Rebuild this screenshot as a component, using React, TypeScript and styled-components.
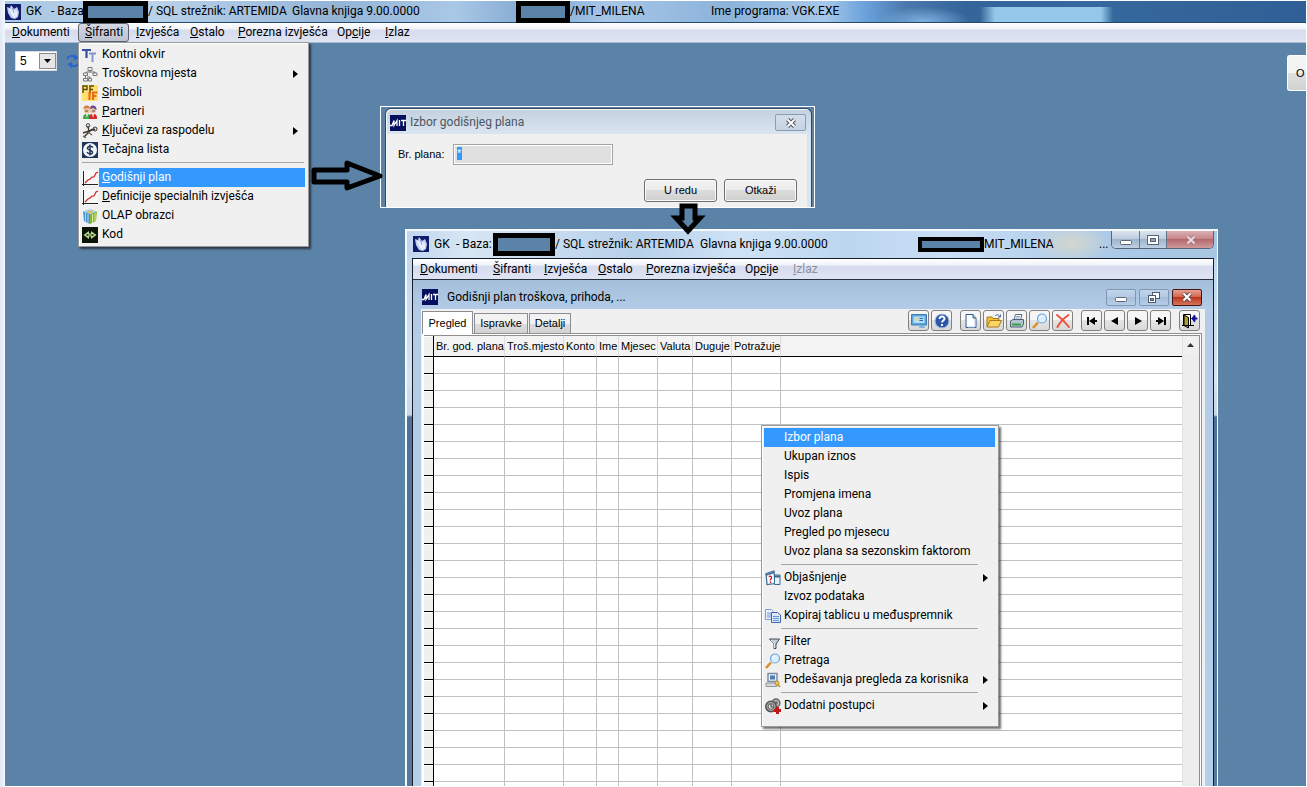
import React from "react";
import styled, { createGlobalStyle, css } from "styled-components";

const UI = `Roboto, "Open Sans", sans-serif`;
const SANS = `"Liberation Sans", Arial, sans-serif`;

const Global = createGlobalStyle`
  * { box-sizing: border-box; }
  body { margin: 0; background: #fff; font: 12px/19px ${UI}; color: #000; }
  button, input, select { font: inherit; color: inherit; margin: 0; }
  svg { display: block; flex: none; }
`;

/* ---------- desktop ---------- */
const Desktop = styled.main`
  position: relative;
  display: flex;
  flex-direction: column;
  height: 100vh;
  overflow: hidden;
  padding: 1px 1px 1px 5px;
  background: linear-gradient(90deg, #dfe8f4 0, #f4f7fc 5px, #fff 5px);
`;

const TitleBar = styled.header`
  display: flex;
  align-items: center;
  flex: none;
  height: 22px;
  border-bottom: 1px solid #24496f;
  white-space: nowrap;
  background:
    radial-gradient(ellipse 48px 14px at 918px 20px, #7aaedd 0, #7aaedd00 100%),
    linear-gradient(90deg, #33669c00 975px, #93c8e8 990px, #93c8e8 1096px, #33669c00 1108px) 0 6px no-repeat,
    linear-gradient(90deg, #aac8e4 0, #b9d2ea 150px, #94b4d6 330px, #a9c8e6 450px, #7fa5cf 530px, #a6c6e8 600px, #8db3da 720px, #a6c8ea 820px, #6ba2dc 860px, #4b79ac 900px, #33659a 960px, #35689c 1100px, #2f5f96 100%);
`;

const Seg = styled.span<{ $w: number }>`
  flex: 0 0 ${(p) => p.$w}px;
  min-width: 0;
`;

const Redacted = styled.span<{ $w: number; $h: number; $b: number }>`
  flex: 0 0 ${(p) => p.$w}px;
  height: ${(p) => p.$h}px;
  border: ${(p) => p.$b}px solid #000;
  background: #5b82a7;
`;

const MenuBar = styled.nav`
  display: flex;
  align-items: stretch;
  flex: none;
  height: 20px;
  border-bottom: 1px solid #a9bdd6;
  background: linear-gradient(#fff 0, #f1f3fa 6px, #d7dcee 7px, #dfe4f3 100%);
`;

const MenuButton = styled.button<{ $w: number; $open?: boolean }>`
  flex: 0 0 ${(p) => p.$w}px;
  padding: 0 0 0 6px;
  border: 1px solid transparent;
  border-radius: 3px;
  background: none;
  text-align: left;
  line-height: 17px;
  white-space: nowrap;
  &:disabled { color: #8a8f9b; }
  ${(p) => p.$open && css`
    border-color: #5d636e;
    background: linear-gradient(#d5d9e4, #bcc2d0);
  `}
`;

const Workspace = styled.section`
  display: flex;
  justify-content: space-between;
  align-items: flex-start;
  flex: 1;
  padding: 8px 0 0 10px;
  background: #5b82a7;
`;

const Quick = styled.div`
  display: flex;
  align-items: center;
  gap: 8px;
`;

const Combo = styled.label`
  position: relative;
  display: flex;
  width: 42px;
  height: 20px;
  & > select {
    flex: 1;
    appearance: none;
    border: 1px solid #d5dbe2;
    border-radius: 0;
    padding: 0 0 0 4px;
    background: #fff;
    font: 12px/18px ${SANS};
  }
  & > svg { position: absolute; right: 1px; top: 2px; pointer-events: none; }
`;

const IconButton = styled.button`
  padding: 0;
  border: 0;
  background: none;
`;

const EdgeButton = styled.button`
  width: 19px;
  height: 36px;
  margin-top: 4px;
  padding: 0 0 0 8px;
  border: 1px solid #fff;
  border-right: 0;
  border-radius: 3px 0 0 3px;
  background: linear-gradient(#f4f4f4 50%, #e0e0e0 50%, #d2d2d2);
  font: 11px/16px ${SANS};
  text-align: left;
`;

/* ---------- popup menus ---------- */
const Popup = styled.div<{ $x: number; $y: number; $w: number; $tail: number }>`
  position: absolute;
  left: ${(p) => p.$x}px;
  top: ${(p) => p.$y}px;
  width: ${(p) => p.$w}px;
  padding: 2px 3px ${(p) => p.$tail}px 2px;
  border: 1px solid #9a9a9a;
  background: #f0f0f0;
  box-shadow: inset 1px 1px 0 #fff, 2px 2px 2px #00000090;
  z-index: 5;
`;

const Item = styled.button<{ $sel?: boolean; $full?: boolean }>`
  display: flex;
  align-items: center;
  width: 100%;
  height: 19px;
  padding: 0;
  border: 0;
  background: ${(p) => (p.$sel && p.$full ? "#3399ff" : "none")};
  color: ${(p) => (p.$sel ? "#fff" : "#000")};
  text-align: left;
  white-space: nowrap;
`;

const Slot = styled.span<{ $w: number }>`
  display: flex;
  justify-content: center;
  flex: 0 0 ${(p) => p.$w}px;
`;

const ItemText = styled.span<{ $sel?: boolean }>`
  flex: 1;
  padding-left: 3px;
  background: ${(p) => (p.$sel ? "#3399ff" : "none")};
`;

const More = styled.span`
  display: flex;
  flex: 0 0 12px;
`;

const Rule = styled.hr<{ $h: number; $l: number; $r: number }>`
  height: ${(p) => p.$h}px;
  margin: 0 ${(p) => p.$r}px 0 ${(p) => p.$l}px;
  border: 0;
  background: linear-gradient(#a5a5a5, #a5a5a5) 0 3px / 100% 1px no-repeat;
`;

/* ---------- dialog ---------- */
const DialogShot = styled.section`
  position: absolute;
  left: 380px;
  top: 106px;
  width: 435px;
  height: 102px;
  padding: 1px 2px 0 4px;
  border: 1px solid #fff;
  background: #5b82a7;
`;

const DialogBox = styled.div`
  display: flex;
  flex-direction: column;
  height: 100%;
  border: 1px solid #38485c;
  border-bottom: 0;
  border-radius: 6px 6px 0 0;
  background: linear-gradient(#c3d0de, #d9e4f0 24px);
  box-shadow: inset 1px 1px 0 #f4f8fc;
`;

const DialogTitle = styled.header`
  display: flex;
  align-items: center;
  gap: 4px;
  height: 25px;
  padding: 2px 5px 0 4px;
  color: #4d5661;
  & > span { flex: 1; }
`;

const GhostClose = styled.button`
  display: flex;
  align-items: center;
  justify-content: center;
  width: 31px;
  height: 17px;
  padding: 0;
  border: 1px solid #8a9cb2;
  border-radius: 2px;
  background: linear-gradient(#d3deea, #c5d3e3);
`;

const DialogBody = styled.div`
  flex: 1;
  margin: 0 4px 0 1px;
  padding: 10px 10px 0 11px;
  background: #f0f0f0;
  font: 11px/15px ${SANS};
`;

const FieldRow = styled.label`
  display: flex;
  align-items: center;
  & > span { flex: 0 0 55px; }
  & > input {
    width: 160px;
    height: 21px;
    padding: 0 0 3px 3px;
    border: 1px solid #a4a4a4;
    outline: 1px solid #fff;
    outline-offset: -2px;
    color: #fff;
    background: linear-gradient(#3399ff, #3399ff) 3px 2px / 5px 13px no-repeat, #e0e0e0;
  }
`;

const Actions = styled.div`
  display: flex;
  justify-content: flex-end;
  gap: 7px;
  margin-top: 14px;
`;

const PushButton = styled.button`
  width: 73px;
  height: 23px;
  padding: 0;
  border: 1px solid #707070;
  border-radius: 3px;
  background: linear-gradient(#f3f3f3 0, #ebebeb 50%, #dcdcdc 50%, #cfcfcf 100%);
  box-shadow: inset 0 0 0 1px #fafafa;
`;

/* ---------- child application window ---------- */
const AppWindow = styled.section`
  position: absolute;
  left: 405px;
  top: 229px;
  bottom: 1px;
  width: 813px;
  display: flex;
  flex-direction: column;
  padding: 0 3px 0 5px;
  border: solid #f4f9fe;
  border-width: 2px 1px 0 2px;
  overflow: hidden;
  background:
    radial-gradient(ellipse 40px 20px at 665px 12px, #d3d6cc 0, #d3d6cc00 100%),
    linear-gradient(90deg, #bfd6ee 0, #d8e6f4 60px, #b7d0ea 230px, #cfe2f5 330px, #bcd6f0 440px, #c9def4 540px, #abc9e8 700px, #a9c6e2 100%) 0 0 / 100% 28px no-repeat,
    linear-gradient(#c3d8ec 28px, #d5e2ef 150px, #c5d6e6 184px, #4f7296 186px, #57799c 100%);
`;

const WindowTitle = styled.header`
  display: flex;
  align-items: center;
  flex: none;
  height: 27px;
  padding: 0 0 1px 1px;
  white-space: nowrap;
`;

const Frame = styled.div`
  display: flex;
  flex-direction: column;
  flex: 1;
  min-height: 0;
  border: 1px solid #161d28;
  border-bottom: 0;
  background: linear-gradient(#99b4d1, #b3cbe6 50px, #b6cfe8);
`;

const FrameMenu = styled(MenuBar)`
  height: 21px;
  border-bottom: 1px solid #27313e;
`;

const CaptionGroup = styled.div`
  display: flex;
  align-self: flex-start;
  flex: 0 0 103px;
  height: 18px;
  border: 1px solid #56657a;
  border-top: 0;
  border-radius: 0 0 5px 5px;
  overflow: hidden;
`;

const CaptionButton = styled.button<{ $w: number; $tone: "glass" | "rose" }>`
  flex: 0 0 ${(p) => p.$w}px;
  display: flex;
  align-items: center;
  justify-content: center;
  padding: 0;
  border: 0;
  border-right: 1px solid #66758a;
  background: ${(p) => p.$tone === "rose"
    ? "linear-gradient(#dcb1b4, #c58285 50%, #b5686c 50%, #cf9b9c)"
    : "linear-gradient(#dbe5ef, #bccbdc 50%, #9fb4cb 50%, #bfd0e2)"};
  &:last-child { border-right: 0; }
`;

const ChildTitle = styled.header`
  display: flex;
  align-items: center;
  flex: none;
  height: 29px;
  padding: 5px 11px 0 9px;
  & > span { flex: 1; padding-left: 9px; }
`;

const ChildButtons = styled.div`
  display: flex;
  gap: 3px;
`;

const ChildButton = styled.button<{ $red?: boolean }>`
  display: flex;
  align-items: center;
  justify-content: center;
  width: 30px;
  height: 17px;
  padding: 0;
  border: 1px solid ${(p) => (p.$red ? "#4a1510" : "#7e97b5")};
  border-radius: 2px;
  background: ${(p) => p.$red
    ? "linear-gradient(#e3a193, #d0604c 50%, #bd3620 50%, #d2765a)"
    : "linear-gradient(#c2d5ea, #b2c9e2 50%, #a5bfdc 50%, #b6cde6)"};
`;

const Content = styled.div`
  display: flex;
  flex-direction: column;
  flex: 1;
  min-height: 0;
  margin: 0 8px;
  background: #f0f0f0;
`;

const TopRow = styled.div`
  display: flex;
  justify-content: space-between;
  flex: none;
  height: 24px;
  padding: 0 5px 0 1px;
`;

const Tabs = styled.div`
  display: flex;
  align-items: flex-end;
  gap: 1px;
`;

const Tab = styled.button<{ $w: number; $on?: boolean }>`
  position: relative;
  width: ${(p) => p.$w}px;
  height: ${(p) => (p.$on ? 23 : 20)}px;
  margin-bottom: ${(p) => (p.$on ? -1 : 0)}px;
  padding: 0;
  border: 1px solid #8c8e94;
  border-bottom: 0;
  background: ${(p) => (p.$on ? "#fff" : "linear-gradient(#f2f2f2 50%, #dedede 50%, #d2d2d2)")};
  font: 11px/19px ${SANS};
  z-index: ${(p) => (p.$on ? 1 : 0)};
`;

const Tools = styled.div`
  display: flex;
  gap: 8px;
  padding-top: 1px;
`;

const ToolGroup = styled.div`
  display: flex;
  gap: 2px;
`;

const Tool = styled.button`
  display: flex;
  align-items: center;
  justify-content: center;
  width: 21px;
  height: 21px;
  padding: 0;
  border: 1px solid #808080;
  border-radius: 3px;
  background: linear-gradient(#f6f6f6 50%, #e4e4e4 50%, #d8d8d8);
`;

const Panel = styled.div`
  display: flex;
  flex: 1;
  min-height: 0;
  margin: 0 3px 0 1px;
  padding: 1px 1px 0 1px;
  border: 1px solid #909090;
  border-bottom: 0;
  border-left-color: #fff;
  background: #fff;
`;

const GridBox = styled.div`
  display: flex;
  flex: 1;
  min-width: 0;
  overflow: hidden;
  border: 1px solid #8f8f8f;
  border-bottom: 0;
  border-left: 0;
`;

const GridView = styled.div`
  flex: 1;
  min-width: 0;
  overflow: hidden;
`;

const Table = styled.table`
  width: 100%;
  table-layout: fixed;
  border-collapse: separate;
  border-spacing: 0;
  font: 11px/15px ${SANS};
  th, td { padding: 0; height: 17px; }
  th {
    height: 21px;
    padding-left: 2px;
    border-right: 1px solid #dcdcdc;
    border-bottom: 1px solid #000;
    background: #f3f3f3;
    font-weight: normal;
    text-align: left;
    white-space: nowrap;
  }
  td {
    border-right: 1px solid #c0c0c0;
    border-bottom: 1px solid #c0c0c0;
    background: #fff;
  }
  th:first-child, td:first-child {
    border-right: 1px solid #000;
    border-bottom: 1px solid #000;
    background: #f0f0f0;
    box-shadow: inset 0 1px 0 #fff;
  }
  th:last-child, td:last-child { border-right: 0; }
`;

const Scroll = styled.div`
  flex: 0 0 17px;
  background: #ededed;
  border-left: 1px solid #e2e2e2;
`;

const ScrollUp = styled.button`
  display: flex;
  align-items: center;
  justify-content: center;
  width: 15px;
  height: 18px;
  padding: 0;
  border: 0;
  background: #f0f0f0;
`;

const ArrowLayer = styled.svg<{ $x: number; $y: number }>`
  position: absolute;
  left: ${(p) => p.$x}px;
  top: ${(p) => p.$y}px;
  z-index: 4;
`;

/* ---------- icons ---------- */
const Svg = ({ children, s = 16 }: { children: React.ReactNode; s?: number }) => (
  <svg width={s} height={s} viewBox="0 0 16 16" fill="none" aria-hidden="true">{children}</svg>
);

const GkIcon = () => (
  <Svg>
    <rect width="16" height="16" fill="#101c6c" />
    <path d="M2 3l3 1 1-3 3 4 3-2 2 5-1 5-3 2-4-1-3-5z" fill="#c4d2f2" />
    <path d="M4 5l2 5 3 4 3-2V7" fill="#e8eefc" />
    <path d="M7.500 4l1.500 5" stroke="#7d92d0" strokeWidth=".8" />
  </Svg>
);
const MitIcon = () => (
  <Svg>
    <rect width="16" height="16" fill="#060f5e" />
    <path d="M0 10.500h2l2-5v5l3-5v5.500M9.500 5v6M11 5.500h5M13.500 5v6" stroke="#fff" strokeWidth="1.300" />
  </Svg>
);
const TypeIcon = () => (
  <Svg>
    <path d="M0 3h9M4.500 3v8" stroke="#3450a0" strokeWidth="2.200" />
    <path d="M7 6.500h7M10.500 6v9" stroke="#8296cc" strokeWidth="2" />
  </Svg>
);
const TreeIcon = () => (
  <Svg>
    <path d="M6 1.500h4v3H6zM1.500 7h4v2.500h-4zM11 7h4v2.500h-4zM1.500 12.500h4V15h-4zM6.500 12.500h3V15h-3z" fill="#f6f6f6" stroke="#777" />
    <path d="M8 4.500v2M4 7V6h9v1M3.500 9.500v3M5 11h3v1.500" stroke="#777" />
  </Svg>
);
const PfIcon = () => (
  <Svg>
    <rect width="16" height="16" fill="#ffe070" />
    <path d="M1 8V1h4v3.500H1M8 9V1h4M8 4.500h3" stroke="#5c4a08" strokeWidth="1.400" />
    <path d="M7.500 7v8M11 15V7.500h4.500M11 11h3.500" stroke="#f06a10" strokeWidth="2.200" />
  </Svg>
);
const PeopleIcon = () => (
  <Svg>
    <path d="M1 15c0-4 1-5 4-5s4 1 4 5z" fill="#3faa4a" />
    <path d="M7 15c0-4 1-5 4-5s4 1 4 5z" fill="#d42828" />
    <circle cx="5" cy="6.500" r="3" fill="#efc197" />
    <circle cx="11" cy="6.500" r="3" fill="#efc197" />
    <path d="M1.500 5c0-3 2-3.500 3.500-3.500S8 2.500 8 4.500L5 4z" fill="#d2823c" />
    <path d="M8 5c0-3 1.500-3.500 3-3.500s3.500 1 3.500 3.500v1L11 4z" fill="#744a8c" />
    <path d="M3 7h3M10 7h3" stroke="#456" strokeWidth="1.200" />
    <path d="M4 10l1 4 1-4M10 10l1 4 1-4" fill="#f6f2ee" />
  </Svg>
);
const ScissorsIcon = () => (
  <Svg>
    <path d="M2 14L10 6M1 10l12-4M6 3l1 6" stroke="#3a362e" strokeWidth="1.400" />
    <circle cx="6" cy="2.500" r="1.800" stroke="#3a362e" />
    <circle cx="13" cy="6" r="2" stroke="#3a362e" />
    <path d="M1 13l3 2M6 9l4 3" stroke="#6c6250" strokeWidth="1.200" />
  </Svg>
);
const DollarIcon = () => (
  <Svg>
    <rect width="16" height="16" fill="#20355a" />
    <circle cx="8" cy="8" r="7" fill="#f4f6fa" />
    <path d="M11 5.500C10 4 6 3.500 5.500 6S11 8 10.500 10.500 6 12 5 10M8 2.500v11" stroke="#20355a" strokeWidth="1.500" />
  </Svg>
);
const ChartIcon = () => (
  <Svg>
    <rect width="16" height="16" fill="#f8f8f8" />
    <path d="M1.500 1v15M0 14.500h16" stroke="#222" />
    <path d="M3 13l3-3 2-1 2-2 2 0 2-4 2-1" stroke="#d02020" strokeWidth="1.200" />
  </Svg>
);
const CubeIcon = () => (
  <Svg>
    <path d="M1 3.500L8 1l7 2.500L8 6z" fill="#a9d2ec" />
    <path d="M1 3.500L8 6v10l-6-3z" fill="#4a92c8" />
    <path d="M15 3.500L8 6v10l6-3z" fill="#7fb434" />
    <path d="M3.500 5v8.500M6 6v8.500" stroke="#cfe6f4" strokeWidth=".8" />
    <path d="M10.500 6v8.500M13 5v8" stroke="#e4f0a4" strokeWidth=".9" />
    <path d="M5 2.500l5 2.500M11 2.500L5 4.500" stroke="#f0b83c" />
  </Svg>
);
const CodeIcon = () => (
  <Svg>
    <rect width="16" height="16" fill="#0c1408" />
    <path d="M7 4L1.500 8 7 12zM9 4l5.500 4L9 12z" fill="#b8dc88" />
    <path d="M8 5v6M4.500 8h7" stroke="#0c1408" strokeWidth="1.600" />
    <path d="M8 6v4M6 8h4" stroke="#e8f4d0" strokeWidth=".8" />
  </Svg>
);
const HelpBookIcon = () => (
  <Svg>
    <path d="M1 3.500l8-2.500 1 12.500-8 1z" fill="#f4f8ff" stroke="#3a6a92" strokeWidth="1.200" />
    <path d="M1 5l8-2.500" stroke="#3a6a92" strokeWidth="1.800" />
    <path d="M9.500 5H15v9.500H9.500z" fill="#e4f0fa" stroke="#3a6a92" />
    <path d="M9.500 6.500H15" stroke="#3a6a92" strokeWidth="2" />
    <path d="M4 7c1-1.500 3-.5 2.500 1S5 9.500 5.500 10.500M5.500 11.500V13" stroke="#c8201c" strokeWidth="1.300" />
  </Svg>
);
const CopyIcon = () => (
  <Svg>
    <path d="M.5 1.500h6l2 2v8h-8z" fill="#eaf2ff" stroke="#7c9cd4" />
    <path d="M6.500 4.500h6l3 2.500v7.500h-9z" fill="#dce8fc" stroke="#3c66b4" />
    <path d="M2 5h4M2 7h4M2 9h4M8 8.500h6M8 10.500h6M8 12.500h6" stroke="#6c90d0" />
  </Svg>
);
const FilterIcon = () => (
  <Svg>
    <path d="M4.500 5h10L11 10v4.500H9V10z" fill="#c4ccd4" stroke="#3e4a56" />
    <path d="M6 6l3.500 4v4" stroke="#fff" strokeWidth=".8" />
  </Svg>
);
const LensIcon = () => (
  <Svg>
    <path d="M1 15l5-5.500" stroke="#d8902c" strokeWidth="2.600" />
    <circle cx="10" cy="5.500" r="4.500" fill="#dcefff" stroke="#6aa4dc" strokeWidth="1.200" />
    <path d="M7.500 5c.5-1.500 1.500-2 3-2" stroke="#fff" />
  </Svg>
);
const UserViewIcon = () => (
  <Svg>
    <path d="M3 1.500h9v8H3z" fill="#eaf0f6" stroke="#7b8da4" strokeWidth="1.500" />
    <path d="M5 3.500h5v4H5z" fill="#4f7ab4" />
    <path d="M1 11h11v3.500H1z" fill="#d4d8de" stroke="#8d98a4" />
    <circle cx="12" cy="11" r="2" fill="#f4cc54" stroke="#b8882c" />
    <path d="M13 12.500l2 2.500" stroke="#d09a30" strokeWidth="1.800" />
  </Svg>
);
const GearsIcon = () => (
  <Svg>
    <circle cx="11" cy="5" r="4" fill="#b4b4b4" stroke="#666" strokeWidth="1.300" />
    <circle cx="11.500" cy="4.500" r="1.500" fill="#777" />
    <circle cx="6" cy="8.500" r="5.300" fill="#9c9c9c" stroke="#4c4c4c" strokeWidth="1.300" />
    <circle cx="6" cy="8.500" r="2.800" fill="#d8d8d8" stroke="#666" />
    <path d="M6 6v3h3" stroke="#444" />
    <path d="M12.500 9v7M9 12.500h7" stroke="#c41818" strokeWidth="3" />
  </Svg>
);
const RefreshIcon = () => (
  <Svg>
    <path d="M2 6c1-3 5-4 8-2M14 10c-1 3-5 4-8 2" stroke="#2b63d0" strokeWidth="2" />
    <path d="M9 1l5 4-5 2zM7 9l-5 2 5 4z" fill="#2b63d0" />
  </Svg>
);
const ScreenIcon = () => (
  <Svg>
    <path d="M.5 1.500h15v10.500H.5z" fill="#5fa8dc" stroke="#3c7cb4" />
    <path d="M2.500 3.500h11v6.500h-11z" fill="#b4dcf8" />
    <path d="M4 4.500h3V8H4z" fill="#e8d87c" /><path d="M8.500 5.500H12M8.500 7.500H12" stroke="#2d6da4" />
    <path d="M9 12h4l1 3H8z" fill="#7cb4dc" />
  </Svg>
);
const HelpIcon = () => (
  <Svg>
    <circle cx="8" cy="8" r="7" fill="#2c56a8" stroke="#a8bce0" />
    <path d="M5.500 6c0-3.500 5.500-3 5 0-.3 1.500-2.500 1.500-2.500 3.500M8 11v2" stroke="#fff" strokeWidth="1.900" />
  </Svg>
);
const NewIcon = () => (
  <Svg>
    <path d="M3 1.500h7l3 3.500v9.500H3z" fill="#fff" stroke="#31568c" />
    <path d="M10 1.500V5h3" fill="#c4d8f0" stroke="#31568c" />
    <path d="M12 6v8H5" stroke="#b4cce8" />
  </Svg>
);
const FolderIcon = () => (
  <Svg>
    <path d="M1 13.500V4h5l1 1.500h6V8" fill="#f4c038" stroke="#a8781c" />
    <path d="M1 14l3-6.500h11.500L12.500 14z" fill="#fbd464" stroke="#a8781c" />
    <path d="M9 3c2-2 4-1.500 5 1M12 4h2.500V1.500" stroke="#4a6a94" />
  </Svg>
);
const PrintIcon = () => (
  <Svg>
    <path d="M5 7l1.500-5.500H13L11.500 7z" fill="#fff" stroke="#5b7088" />
    <path d="M1.500 8L4 6.500h10.500V11L13 14H1.500z" fill="#b4c4d0" stroke="#4d6274" />
    <path d="M3 11.500h9" stroke="#3c9a48" strokeWidth="2" />
    <path d="M7 3.500h4M6.500 5h4" stroke="#8aa8c8" />
  </Svg>
);
const DeleteIcon = () => (
  <Svg>
    <path d="M2 2c4 3 8 7 12 12M13.500 2C9 5 5 9 2.500 14" stroke="#f0503c" strokeWidth="2" strokeLinecap="round" />
  </Svg>
);
const FirstIcon = () => <Svg><path d="M3 4h2v8H3zM11 4v8L5 8zM10 7h3v2h-3z" fill="#000" /></Svg>;
const PrevIcon = () => <Svg><path d="M11 4v8L4 8z" fill="#000" /></Svg>;
const NextIcon = () => <Svg><path d="M5 4v8l7-4z" fill="#000" /></Svg>;
const LastIcon = () => <Svg><path d="M11 4h2v8h-2zM5 4l6 4-6 4z" fill="#000" /><path d="M3 7h3v2H3z" fill="#000" /></Svg>;
const ExitIcon = () => (
  <Svg>
    <path d="M1.500 1.500h7v11h-7z" fill="#fff" stroke="#000" />
    <path d="M2 2l4.500 2.500V15L2 12.500z" fill="#a8a030" stroke="#000" />
    <path d="M0 12.500h12" stroke="#000" />
    <path d="M15.500 5.500H11M12.500 2.500v6" stroke="#10109c" strokeWidth="2" /><path d="M9 5.500l4-4v8z" fill="#10109c" />
  </Svg>
);

const Cross = ({ edge, fill = "#fff" }: { edge: string; fill?: string }) => (
  <svg width="12" height="10" viewBox="0 0 12 10" aria-hidden="true">
    <path d="M2.500 1.500l7 7M9.500 1.500l-7 7" stroke={edge} strokeWidth="4" />
    <path d="M2.500 1.500l7 7M9.500 1.500l-7 7" stroke={fill} strokeWidth="2" />
  </svg>
);
const MinGlyph = () => (
  <svg width="12" height="10" viewBox="0 0 12 10" aria-hidden="true">
    <rect x=".5" y="5.500" width="11" height="4" rx="1" fill="#fff" stroke="#5a6678" />
  </svg>
);
const MaxGlyph = () => (
  <svg width="12" height="10" viewBox="0 0 12 10" aria-hidden="true">
    <rect x=".5" y=".5" width="11" height="9" fill="#fff" stroke="#5a6678" />
    <rect x="3.500" y="3.500" width="5" height="3" fill="#8ea4bd" stroke="#5a6678" />
  </svg>
);
const RestoreGlyph = () => (
  <svg width="12" height="11" viewBox="0 0 12 11" aria-hidden="true">
    <rect x="4.500" y=".5" width="7" height="6" fill="#fff" stroke="#4c5a6e" />
    <rect x=".5" y="3.500" width="7" height="7" fill="#fff" stroke="#4c5a6e" />
    <rect x="2.500" y="6.500" width="3" height="2" fill="#8ea4bd" stroke="#4c5a6e" />
  </svg>
);

/* ---------- data ---------- */
type Entry = { text: string; hot?: number; icon?: React.ReactNode; more?: boolean; sel?: boolean } | null;

const bar: { text: string; hot: number; w: number }[] = [
  { text: "Dokumenti", hot: 0, w: 73 },
  { text: "Šifranti", hot: 0, w: 51 },
  { text: "Izvješća", hot: 0, w: 54 },
  { text: "Ostalo", hot: 0, w: 48 },
  { text: "Porezna izvješća", hot: 0, w: 99 },
  { text: "Opcije", hot: 2, w: 48 },
  { text: "Izlaz", hot: 0, w: 36 },
];

const sifranti: Entry[] = [
  { text: "Kontni okvir", icon: <TypeIcon /> },
  { text: "Troškovna mjesta", icon: <TreeIcon />, more: true },
  { text: "Simboli", hot: 0, icon: <PfIcon /> },
  { text: "Partneri", hot: 0, icon: <PeopleIcon /> },
  { text: "Ključevi za raspodelu", hot: 0, icon: <ScissorsIcon />, more: true },
  { text: "Tečajna lista", icon: <DollarIcon /> },
  null,
  { text: "Godišnji plan", hot: 0, icon: <ChartIcon />, sel: true },
  { text: "Definicije specialnih izvješća", hot: 0, icon: <ChartIcon /> },
  { text: "OLAP obrazci", icon: <CubeIcon /> },
  { text: "Kod", icon: <CodeIcon /> },
];

const context: Entry[] = [
  { text: "Izbor plana", sel: true },
  { text: "Ukupan iznos" },
  { text: "Ispis" },
  { text: "Promjena imena" },
  { text: "Uvoz plana" },
  { text: "Pregled po mjesecu" },
  { text: "Uvoz plana sa sezonskim faktorom" },
  null,
  { text: "Objašnjenje", icon: <HelpBookIcon />, more: true },
  { text: "Izvoz podataka" },
  { text: "Kopiraj tablicu u međuspremnik", icon: <CopyIcon /> },
  null,
  { text: "Filter", icon: <FilterIcon /> },
  { text: "Pretraga", icon: <LensIcon /> },
  { text: "Podešavanja pregleda za korisnika", icon: <UserViewIcon />, more: true },
  null,
  { text: "Dodatni postupci", icon: <GearsIcon />, more: true },
];

const columns = [
  { text: "Br. god. plana", w: 71 },
  { text: "Troš.mjesto", w: 59 },
  { text: "Konto", w: 33 },
  { text: "Ime", w: 22 },
  { text: "Mjesec", w: 39 },
  { text: "Valuta", w: 35 },
  { text: "Duguje", w: 39 },
  { text: "Potražuje", w: 49 },
];

const toolGroups: { label: string; icon: React.ReactNode }[][] = [
  [{ label: "Zaslon", icon: <ScreenIcon /> }, { label: "Pomoć", icon: <HelpIcon /> }],
  [
    { label: "Novo", icon: <NewIcon /> },
    { label: "Otvori", icon: <FolderIcon /> },
    { label: "Ispis", icon: <PrintIcon /> },
    { label: "Traži", icon: <LensIcon /> },
    { label: "Briši", icon: <DeleteIcon /> },
  ],
  [
    { label: "Prvi", icon: <FirstIcon /> },
    { label: "Prethodni", icon: <PrevIcon /> },
    { label: "Sljedeći", icon: <NextIcon /> },
    { label: "Zadnji", icon: <LastIcon /> },
  ],
  [{ label: "Izlaz", icon: <ExitIcon /> }],
];

const Hot = ({ text, at }: { text: string; at?: number }) =>
  at === undefined ? <>{text}</> : <>{text.slice(0, at)}<u>{text[at]}</u>{text.slice(at + 1)}</>;

const BarItems = ({ open, disabled }: { open?: string; disabled?: string }) => (
  <>
    {bar.map((b) => (
      <MenuButton key={b.text} $w={b.w} $open={b.text === open} disabled={b.text === disabled}>
        <Hot text={b.text} at={b.hot} />
      </MenuButton>
    ))}
  </>
);

const Entries = ({ list, full, slot, rule }: { list: Entry[]; full?: boolean; slot: number; rule: { h: number; l: number; r: number } }) => (
  <>
    {list.map((e, i) =>
      e === null ? (
        <Rule key={i} $h={rule.h} $l={rule.l} $r={rule.r} />
      ) : (
        <Item key={i} role="menuitem" $sel={e.sel} $full={full}>
          <Slot $w={slot}>{e.icon}</Slot>
          <ItemText $sel={e.sel}><Hot text={e.text} at={e.hot} /></ItemText>
          {e.more && (
            <More>
              <svg width="5" height="8" viewBox="0 0 5 8" aria-hidden="true"><path d="M0 0l5 4-5 4z" fill="#000" /></svg>
            </More>
          )}
        </Item>
      )
    )}
  </>
);

export default function App() {
  return (
    <>
      <Global />
      <Desktop>
        <TitleBar>
          <Seg $w={21}><GkIcon /></Seg>
          <Seg $w={25}>GK</Seg>
          <Seg $w={32}>- Baza:</Seg>
          <Redacted $w={65} $h={22} $b={5} />
          <Seg $w={144}>/ SQL strežnik: ARTEMIDA</Seg>
          <Seg $w={224}>Glavna knjiga 9.00.0000</Seg>
          <Redacted $w={54} $h={22} $b={5} />
          <Seg $w={141}>/MIT_MILENA</Seg>
          <span>Ime programa: VGK.EXE</span>
        </TitleBar>
        <MenuBar><BarItems open="Šifranti" /></MenuBar>
        <Workspace>
          <Quick>
            <Combo>
              <select aria-label="Godina" defaultValue="5"><option>5</option></select>
              <svg width="17" height="16" viewBox="0 0 17 16" aria-hidden="true">
                <rect x=".5" y=".5" width="16" height="15" fill="#e6e6e6" stroke="#8b8b8b" />
                <path d="M5 6h7L8.500 10z" fill="#000" />
              </svg>
            </Combo>
            <IconButton aria-label="Osvježi"><RefreshIcon /></IconButton>
          </Quick>
          <EdgeButton>O</EdgeButton>
        </Workspace>

        <Popup role="menu" $x={78} $y={42} $w={231} $tail={2}>
          <Entries list={sifranti} slot={18} rule={{ h: 9, l: 1, r: 1 }} />
        </Popup>

        <DialogShot role="dialog" aria-label="Izbor godišnjeg plana">
          <DialogBox>
            <DialogTitle>
              <MitIcon />
              <span>Izbor godišnjeg plana</span>
              <GhostClose aria-label="Zatvori"><Cross edge="#4c525c" /></GhostClose>
            </DialogTitle>
            <DialogBody>
              <FieldRow>
                <span>Br. plana:</span>
                <input type="text" defaultValue="*" />
              </FieldRow>
              <Actions>
                <PushButton>U redu</PushButton>
                <PushButton>Otkaži</PushButton>
              </Actions>
            </DialogBody>
          </DialogBox>
        </DialogShot>

        <AppWindow>
          <WindowTitle>
            <Seg $w={21}><GkIcon /></Seg>
            <Seg $w={22}>GK</Seg>
            <Seg $w={37}>- Baza:</Seg>
            <Redacted $w={62} $h={23} $b={5} />
            <Seg $w={145}>/ SQL strežnik: ARTEMIDA</Seg>
            <Seg $w={218}>Glavna knjiga 9.00.0000</Seg>
            <Redacted $w={66} $h={15} $b={4} />
            <Seg $w={115}>MIT_MILENA</Seg>
            <Seg $w={12}>...</Seg>
            <CaptionGroup>
              <CaptionButton $w={28} $tone="glass" aria-label="Smanji"><MinGlyph /></CaptionButton>
              <CaptionButton $w={27} $tone="glass" aria-label="Povećaj"><MaxGlyph /></CaptionButton>
              <CaptionButton $w={47} $tone="rose" aria-label="Zatvori"><Cross edge="#a87c82" fill="#ead8da" /></CaptionButton>
            </CaptionGroup>
          </WindowTitle>
          <Frame>
            <FrameMenu><BarItems disabled="Izlaz" /></FrameMenu>
            <ChildTitle>
              <MitIcon />
              <span>Godišnji plan troškova, prihoda, ...</span>
              <ChildButtons>
                <ChildButton aria-label="Smanji"><MinGlyph /></ChildButton>
                <ChildButton aria-label="Obnovi"><RestoreGlyph /></ChildButton>
                <ChildButton $red aria-label="Zatvori"><Cross edge="#6d4a50" /></ChildButton>
              </ChildButtons>
            </ChildTitle>
            <Content>
              <TopRow>
                <Tabs role="tablist">
                  <Tab role="tab" $w={51} $on aria-selected>Pregled</Tab>
                  <Tab role="tab" $w={54}>Ispravke</Tab>
                  <Tab role="tab" $w={42}>Detalji</Tab>
                </Tabs>
                <Tools>
                  {toolGroups.map((g, i) => (
                    <ToolGroup key={i}>
                      {g.map((t) => <Tool key={t.label} aria-label={t.label}>{t.icon}</Tool>)}
                    </ToolGroup>
                  ))}
                </Tools>
              </TopRow>
              <Panel>
                <GridBox>
                  <GridView>
                    <Table>
                      <colgroup>
                        <col style={{ width: 10 }} />
                        {columns.map((c) => <col key={c.text} style={{ width: c.w }} />)}
                        <col />
                      </colgroup>
                      <thead>
                        <tr>
                          <th />
                          {columns.map((c) => <th key={c.text}>{c.text}</th>)}
                          <th />
                        </tr>
                      </thead>
                      <tbody>
                        {Array.from({ length: 40 }, (_, r) => (
                          <tr key={r}>
                            <td />
                            {columns.map((c) => <td key={c.text} />)}
                            <td />
                          </tr>
                        ))}
                      </tbody>
                    </Table>
                  </GridView>
                  <Scroll>
                    <ScrollUp aria-label="Gore">
                      <svg width="7" height="4" viewBox="0 0 7 4" aria-hidden="true"><path d="M0 4l3.500-4L7 4z" fill="#333" /></svg>
                    </ScrollUp>
                  </Scroll>
                </GridBox>
              </Panel>
            </Content>
          </Frame>
        </AppWindow>

        <Popup role="menu" $x={761} $y={425} $w={238} $tail={11}>
          <Entries list={context} full slot={17} rule={{ h: 7, l: 17, r: 17 }} />
        </Popup>

        <ArrowLayer $x={308} $y={156} width="80" height="40" viewBox="308 156 80 40" aria-hidden="true">
          <path d="M314 170H347V163L380 176L347 188V182H314Z" fill="#5b82a7" stroke="#000" strokeWidth="5" strokeLinejoin="round" />
        </ArrowLayer>
        <ArrowLayer $x={670} $y={200} width="36" height="38" viewBox="670 200 36 38" aria-hidden="true">
          <path d="M682 206H695V218H700L688 231L676 218H682Z" fill="#5b82a7" stroke="#000" strokeWidth="5" />
        </ArrowLayer>
      </Desktop>
    </>
  );
}
